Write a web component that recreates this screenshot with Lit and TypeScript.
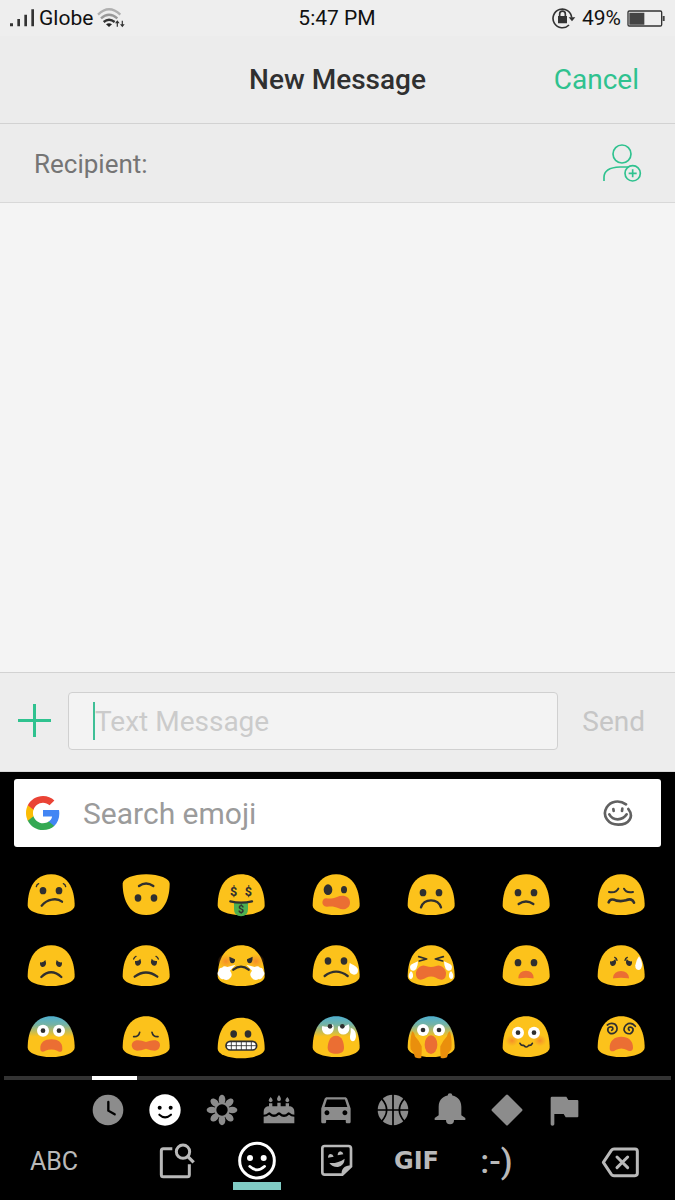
import { LitElement, html, svg, css, SVGTemplateResult } from "lit";
import { customElement, property, state } from "lit/decorators.js";
import { classMap } from "lit/directives/class-map.js";

interface Emoji {
  name: string;
  face: SVGTemplateResult;
  skin?: string;
}

interface Item {
  name: string;
  icon: SVGTemplateResult;
}

const INK = "#2f2f2f";
const MOUTH = "#eb6e33";

// faces are drawn on a 150 x 132 grid
const line = (d: string, w = 7) => svg`
  <path d=${d} fill="none" stroke=${INK} stroke-width=${w} stroke-linecap="round" stroke-linejoin="round"></path>`;

const fill = (d: string, color: string) => svg`<path d=${d} fill=${color}></path>`;

const eyes = (y: number, left = 51, right = 99) => svg`
  <ellipse cx=${left} cy=${y} rx="10" ry="11" fill=${INK}></ellipse>
  <ellipse cx=${right} cy=${y} rx="10" ry="11" fill=${INK}></ellipse>`;

const wideEyes = (y: number) => svg`
  <circle cx="51" cy=${y} r="18" fill="#fff"></circle>
  <circle cx="99" cy=${y} r="18" fill="#fff"></circle>
  <circle cx="51" cy=${y} r="7" fill=${INK}></circle>
  <circle cx="99" cy=${y} r="7" fill=${INK}></circle>`;

const sadEyes = (y: number) => svg`
  <g fill=${INK} transform="translate(0 ${y})">
    <path d="M42 -4 Q52 -2 58 -11 Q62 -1 59 4 Q55 11 49 10 Q41 8 42 -4z"></path>
    <path d="M108 -4 Q98 -2 92 -11 Q88 -1 91 4 Q95 11 101 10 Q109 8 108 -4z"></path>
  </g>`;

const dollar = (x: number, y: number, size: number) => svg`
  <text class="dollar" x=${x} y=${y} font-size=${size} text-anchor="middle" fill=${INK}>$</text>`;

const blush = (x: number, y: number, r = 20) => svg`
  <ellipse cx=${x} cy=${y} rx=${r} ry=${r - 3} fill="url(#blush)"></ellipse>`;

const EMOJIS: Emoji[] = [
  {
    name: "confused",
    face: svg`${eyes(53)}${line("M31 41 Q32 34 38 32", 4)}${line("M119 41 Q118 34 112 32", 4)}
      ${line("M47 98 Q60 83 77 80 Q95 76 108 86")}`,
  },
  {
    name: "upside down",
    skin: "flipped",
    face: svg`${eyes(75)}${line("M54 39 Q75 24 97 39")}`,
  },
  {
    name: "money mouth",
    face: svg`${dollar(53, 69, 38)}${dollar(97, 69, 38)}
      ${fill("M54 88 H96 V108 Q96 130 75 130 Q54 130 54 108z", "#4caf50")}
      ${line("M43 85 Q75 93 108 85")}${dollar(75, 119, 32)}`,
  },
  {
    name: "woozy",
    face: svg`<ellipse cx="51" cy="50" rx="13" ry="16" fill=${INK}></ellipse>
      <ellipse cx="99" cy="50" rx="9" ry="11" fill=${INK}></ellipse>
      ${fill("M46 76 C58 78 66 76 78 72 C96 64 117 70 117 89 C117 106 98 113 83 106 C70 99 60 100 48 101 C30 102 30 76 46 76z", MOUTH)}`,
  },
  { name: "frowning", face: svg`${eyes(59)}${line("M45 103 C54 75 96 75 105 103", 7)}` },
  { name: "slightly frowning", face: svg`${eyes(59)}${line("M53 93 Q75 78 97 93")}` },
  {
    name: "confounded",
    face: svg`${line("M39 57 Q60 61 67 47", 6)}${line("M111 57 Q90 61 84 47", 6)}
      ${line("M38 88 C42 76 54 79 61 83 C72 85 80 85 90 82 C102 77 111 79 114 89", 8)}`,
  },
  { name: "disappointed", face: svg`${sadEyes(59)}${line("M46 99 Q75 71 106 99")}` },
  {
    name: "worried",
    face: svg`${sadEyes(55)}${line("M38 45 Q40 39 45 37", 4)}${line("M112 45 Q110 39 105 37", 4)}
      ${line("M41 98 Q75 73 109 98")}`,
  },
  {
    name: "triumph",
    face: svg`${blush(30, 52, 26)}${blush(120, 52, 26)}
      ${fill("M40 38 L57 46 Q58 57 49 58 Q40 57 40 38z", INK)}${fill("M110 38 L93 46 Q92 57 101 58 Q110 57 110 38z", INK)}
      <g fill="#fff">
        <path d="M59 62 L34 69 Q24 64 18 71 Q9 70 8 81 Q1 89 9 97 Q12 108 22 105 Q34 112 43 101 Q52 92 42 80z"></path>
        <path d="M91 62 L116 69 Q126 64 132 71 Q141 70 142 81 Q149 89 141 97 Q138 108 128 105 Q116 112 107 101 Q98 92 108 80z"></path>
      </g>
      ${line("M52 77 Q75 59 98 77")}`,
  },
  {
    name: "crying",
    face: svg`${eyes(51)}${line("M41 96 Q75 70 110 96")}
      ${fill("M116 58 Q116 56 120 59 Q140 68 141 77 Q142 90 129 92 Q115 90 114 76 Q114 67 116 58z", "#fff")}`,
  },
  {
    name: "loudly crying",
    face: svg`${line("M38 38 L62 45 L40 51", 5)}${line("M112 38 L88 45 L110 51", 5)}
      ${fill("M46 66 C54 61 62 69 75 69 C88 69 96 61 104 66 C118 72 124 86 118 100 C112 112 98 106 90 101 Q75 94 60 101 C52 106 38 112 32 100 C26 86 32 72 46 66z", MOUTH)}
      <g fill="#fff">
        <path d="M36 52 Q36 64 31 74 Q24 84 14 77 Q8 64 20 59z"></path>
        <path d="M14 82 Q22 84 21 98 Q17 108 10 103 Q5 94 14 82z"></path>
        <path d="M114 52 Q114 64 119 74 Q126 84 136 77 Q142 64 130 59z"></path>
        <path d="M136 82 Q128 84 129 98 Q133 108 140 103 Q145 94 136 82z"></path>
      </g>`,
  },
  { name: "frowning open mouth", face: svg`${eyes(56)}${fill("M52 101 Q54 80 75 80 Q96 80 98 101 Q98 104 94 103 Q75 99 56 103 Q52 104 52 101z", MOUTH)}` },
  {
    name: "anxious with sweat",
    face: svg`${sadEyes(56)}${line("M56 40 Q62 42 63 49", 4)}${line("M94 40 Q88 42 87 49", 4)}
      ${fill("M51 101 Q54 81 75 81 Q96 81 99 101 Q99 104 95 103 Q75 99 55 103 Q51 104 51 101z", MOUTH)}
      ${fill("M129 37 Q138 48 138 64 Q137 78 127 78 Q117 77 118 64 Q120 48 129 37z", "#fff")}`,
  },
  {
    name: "fearful",
    skin: "chill",
    face: svg`${wideEyes(47)}
      ${fill("M43 102 C42 82 56 73 76 73 C96 73 110 82 109 102 C109 113 99 112 94 107 Q76 100 58 107 C52 112 43 112 43 102z", MOUTH)}`,
  },
  {
    name: "weary",
    face: svg`${line("M38 65 Q53 66 56 52", 5)}${line("M111 65 Q96 66 93 52", 5)}
      ${fill("M46 76 Q58 74 75 81 Q92 74 104 76 Q117 79 117 91 Q116 106 102 107 Q90 107 75 101 Q60 107 48 107 Q33 106 32 91 Q33 79 46 76z", MOUTH)}`,
  },
  {
    name: "grimacing",
    skin: "low",
    face: svg`${eyes(57, 53, 96)}
      <rect x="30" y="79" width="92" height="26" rx="13" fill="#fff" stroke=${INK} stroke-width="5"></rect>
      <path d="M30 92 H122 M46 79 V105 M61 79 V105 M76 79 V105 M91 79 V105 M106 79 V105" stroke=${INK} stroke-width="2.5"></path>`,
  },
  {
    name: "anxious in cold sweat",
    skin: "chill",
    face: svg`<g fill="#fff">
        <path d="M34 33 Q50 39 66 28 Q72 44 63 53 Q50 64 38 54 Q30 44 34 33z"></path>
        <path d="M82 33 Q98 38 113 28 Q119 44 110 53 Q97 64 85 54 Q78 44 82 33z"></path>
        <path d="M119 38 Q136 44 135 64 Q134 79 125 79 Q116 77 117 64 Q120 52 119 38z"></path>
      </g>
      <circle cx="57" cy="34" r="7" fill=${INK}></circle>
      <circle cx="94" cy="34" r="7" fill=${INK}></circle>
      ${fill("M75 62 C94 62 99 84 99 98 C99 112 88 116 75 116 C62 116 50 112 50 98 C50 84 56 62 75 62z", MOUTH)}`,
  },
  {
    name: "screaming",
    skin: "chill",
    face: svg`${wideEyes(45)}
      <ellipse cx="75" cy="89" rx="19" ry="28" fill=${MOUTH}></ellipse>
      <g fill="#ea8f0c">
        <path d="M18 49 Q24 51 27 64 Q40 78 47 94 Q48 108 46 128 Q38 132 27 127 Q24 112 14 103 Q11 78 18 49z"></path>
        <path d="M132 49 Q126 51 123 64 Q110 78 103 94 Q102 108 104 128 Q112 132 123 127 Q126 112 136 103 Q139 78 132 49z"></path>
      </g>`,
  },
  {
    name: "flushed",
    face: svg`${blush(33, 77)}${blush(117, 77)}${wideEyes(53)}
      ${line("M57 85 Q61 93 68 91 Q73 96 76 96 Q80 96 83 91 Q90 93 94 85", 5)}`,
  },
  {
    name: "dizzy",
    face: svg`${line("M34 30 Q44 22 56 27 Q66 35 62 47 Q55 59 42 55 Q33 49 36 40 Q41 33 49 37 Q53 43 47 46", 5)}
      ${line("M118 34 Q109 22 96 26 Q84 32 84 45 Q89 58 103 56 Q113 50 111 41 Q106 34 99 37 Q95 42 100 46", 5)}
      ${fill("M41 101 C40 76 56 65 76 65 C96 65 112 76 111 99 C110 111 98 109 93 105 Q76 96 59 105 C53 110 42 111 41 101z", MOUTH)}`,
  },
];

const CATEGORIES: Item[] = [
  {
    name: "Recent",
    icon: svg`<circle cx="48" cy="48" r="46"></circle>
      <path class="cut" d="M49 24 V50 L68 61" stroke-width="7"></path>`,
  },
  {
    name: "Smileys",
    icon: svg`<circle cx="48" cy="48" r="47"></circle>
      <circle cx="32" cy="41" r="6" fill="#000"></circle>
      <circle cx="65" cy="41" r="6" fill="#000"></circle>
      <path class="cut" d="M31 62 Q48 78 66 62" stroke-width="6"></path>`,
  },
  {
    name: "Nature",
    icon: svg`${[0, 45, 90, 135, 180, 225, 270, 315].map(
        (a) => svg`<ellipse cx="48" cy="17" rx="10" ry="15" transform="rotate(${a} 48 48)"></ellipse>`
      )}
      <circle cx="48" cy="48" r="23"></circle><circle cx="48" cy="48" r="17" fill="#000"></circle>`,
  },
  {
    name: "Food",
    icon: svg`<path d="M23 9 Q35 22 23 25 Q11 22 23 9z M48 3 Q60 18 48 22 Q36 18 48 3z M73 9 Q85 22 73 25 Q61 22 73 9z"></path>
      <path d="M18 28 H28 V37 H43 V26 H53 V37 H68 V28 H78 V37 H82 Q94 40 94 54 V62 Q86 62 80 56 Q77 53 74 56 Q63 67 52 56 Q48 53 44 56 Q33 67 22 56 Q19 53 16 56 Q10 62 2 62 V54 Q2 40 14 37 H18z"></path>
      <path d="M2 68 Q12 68 18 62 Q33 76 48 62 Q63 76 78 62 Q84 68 94 68 V88 H2z"></path>`,
  },
  {
    name: "Travel",
    icon: svg`<path transform="translate(-11 -15) scale(4.9)" d="M18.92 6.01C18.72 5.42 18.16 5 17.5 5h-11c-.66 0-1.21.42-1.42 1.01L3 12v8c0 .55.45 1 1 1h1c.55 0 1-.45 1-1v-1h12v1c0 .55.45 1 1 1h1c.55 0 1-.45 1-1v-8l-2.08-5.99zM6.5 16c-.83 0-1.5-.67-1.5-1.5S5.67 13 6.5 13s1.5.67 1.5 1.5S7.33 16 6.5 16zm11 0c-.83 0-1.5-.67-1.5-1.5s.67-1.5 1.5-1.5 1.5.67 1.5 1.5-.67 1.5-1.5 1.5zM5 11l1.5-4.5h11L19 11H5z"></path>`,
  },
  {
    name: "Activities",
    icon: svg`<circle cx="48" cy="48" r="46"></circle>
      <path class="cut" d="M48 0 V96 M0 48 H96 M14 14 Q44 48 14 82 M82 14 Q52 48 82 82" stroke-width="5"></path>`,
  },
  {
    name: "Objects",
    icon: svg`<circle cx="48" cy="5" r="7"></circle>
      <path d="M14 64 V38 C14 16 30 4 48 4 C66 4 82 16 82 38 V64 L94 72 V78 H2 V72z"></path>
      <path d="M36 78 H60 Q60 91 48 91 Q36 91 36 78z"></path>`,
  },
  {
    name: "Symbols",
    icon: svg`<path d="M45 3 Q48 0 51 3 L93 45 Q96 48 93 51 L51 93 Q48 96 45 93 L3 51 Q0 48 3 45z"></path>`,
  },
  {
    name: "Flags",
    icon: svg`<path d="M8 12 Q8 8 12 8 H55 L61 18 H88 Q91 18 91 21 V67 Q91 70 88 70 H53 L47 60 H19 V91 Q19 95 13 95 Q8 95 8 91z"></path>`,
  },
];

const SEARCH_ICON = svg`
  <path d="M46 23 H19 Q13 23 13 29 V101 Q13 107 19 107 H91 Q97 107 97 101 V70" stroke-width="9"></path>
  <circle cx="78" cy="32" r="20" stroke-width="9"></circle>
  <path d="M92 46 L110 64" stroke-width="10"></path>`;

const SMILEY_ICON = svg`
  <circle cx="60" cy="59" r="52" stroke-width="9"></circle>
  <circle cx="39" cy="51" r="9" fill="currentColor" stroke="none"></circle>
  <circle cx="80" cy="51" r="9" fill="currentColor" stroke="none"></circle>
  <path d="M38 76 Q60 97 83 76" stroke-width="8" stroke-linecap="round"></path>`;

const STICKER_ICON = svg`
  <path d="M23 15 H94 Q102 15 102 23 V76 L76 101 H23 Q16 101 16 94 V22 Q16 15 23 15z" stroke-width="8"></path>
  <g fill="currentColor" stroke="none">
    <path d="M74 104 Q70 74 104 73z"></path>
    <path d="M33 50 Q33 40 41 39 Q48 40 50 47z"></path>
    <path d="M62 43 Q62 33 70 31 Q78 32 79 40z"></path>
    <path d="M37 66 Q62 68 83 53 Q82 74 63 78 Q46 79 37 66z"></path>
  </g>`;

const DELETE_ICON = svg`
  <path d="M7 64 L31 28 Q34 24 39 24 H102 Q109 24 109 31 V97 Q109 104 102 104 H39 Q34 104 31 100z" stroke-width="9" stroke-linejoin="round"></path>
  <path d="M48 48 L80 80 M80 48 L48 80" stroke-width="9" stroke-linecap="round"></path>`;

@customElement("emoji-face")
class EmojiFace extends LitElement {
  @property({ attribute: false }) emoji!: Emoji;

  static styles = css`
    :host {
      display: block;
    }

    .face {
      display: block;
      width: 50px;
      height: 44px;
      overflow: visible;
    }

    .dollar {
      font-family: Roboto, sans-serif;
      font-weight: 700;
    }
  `;

  render() {
    const skin = this.emoji.skin;
    const place = skin === "flipped" ? "matrix(1 0 0 -1 0 130)" : skin === "low" ? "translate(0 4)" : "";
    return html`
      <svg class="face" viewBox="0 0 150 132" aria-hidden="true">
        <defs>
          <linearGradient id="chill" x1="0" y1="0" x2="0" y2="1">
            <stop offset="0" stop-color="#4fb0d0"></stop>
            <stop offset="0.2" stop-color="#74b3a6"></stop>
            <stop offset="0.5" stop-color="#fcc21b"></stop>
          </linearGradient>
          <radialGradient id="blush">
            <stop offset="0" stop-color="#f4802c" stop-opacity="0.8"></stop>
            <stop offset="1" stop-color="#f4902c" stop-opacity="0"></stop>
          </radialGradient>
        </defs>
        <path
          transform=${place}
          fill=${skin === "chill" ? "url(#chill)" : "#fcc21b"}
          d="M75.5 4 C7 4 5 82 5 98 C5 113 36 126 75.5 126 C115 126 146 113 146 98 C146 82 144 4 75.5 4z"
        ></path>
        ${this.emoji.face}
      </svg>
    `;
  }
}

@customElement("emoji-keyboard")
class EmojiKeyboard extends LitElement {
  @state() category = "Smileys";

  static styles = css`
    :host {
      display: block;
      padding: 7px 0 10px;
      background: #000;
      color: #b9b9b9;
      font-family: Roboto, sans-serif;
    }

    button {
      display: flex;
      align-items: center;
      justify-content: center;
      margin: 0;
      padding: 0;
      border: none;
      background: none;
      color: inherit;
      font: inherit;
      cursor: pointer;
    }

    .search {
      display: flex;
      align-items: center;
      height: 68px;
      margin: 0 14px 12px;
      padding: 0 28px 0 12px;
      box-sizing: border-box;
      border-radius: 3px;
      background: #fff;
      color: #616161;
    }

    .google {
      flex: none;
      width: 34px;
      height: 34px;
      margin-right: 23px;
    }

    .query {
      flex: 1;
      min-width: 0;
      padding: 2px 0 0;
      border: none;
      outline: none;
      background: none;
      font: 30px/36px Roboto, sans-serif;
      color: #333;
    }

    .query::placeholder {
      color: #9b9b9b;
      opacity: 1;
    }

    .doodle {
      width: 30px;
      height: 26px;
      fill: none;
      stroke: currentColor;
      stroke-width: 8;
      stroke-linecap: round;
    }

    .emojis {
      display: grid;
      grid-template-columns: repeat(7, 50px);
      justify-content: space-between;
      padding: 0 29px 0 26px;
    }

    .emojis button {
      height: 71px;
    }

    .track {
      height: 4px;
      margin: 4px 4px 0;
      padding-left: 88px;
      background: #333;
    }

    .thumb {
      width: 45px;
      height: 4px;
      background: #fff;
    }

    .categories {
      display: flex;
      justify-content: center;
      padding-right: 3px;
      color: #8c8c8c;
    }

    .categories button {
      width: 57px;
      height: 60px;
    }

    .categories .on,
    .tools .on {
      color: #fff;
    }

    .category {
      width: 32px;
      height: 32px;
      fill: currentColor;
      overflow: visible;
    }

    .cut {
      fill: none;
      stroke: #000;
      stroke-linecap: round;
    }

    .tools {
      display: flex;
      justify-content: space-between;
      padding: 0 30px;
    }

    .modes {
      display: flex;
      gap: 32px;
      padding-right: 2px;
    }

    .tools button {
      width: 48px;
      height: 50px;
      box-sizing: border-box;
      border-bottom: 8px solid transparent;
    }

    .tools .on {
      border-bottom-color: #80cbc4;
    }

    .tool {
      flex: none;
      width: 40px;
      height: 40px;
      fill: none;
      stroke: currentColor;
    }

    .abc {
      font-size: 25px;
    }

    .gif {
      font-family: "DejaVu Sans", sans-serif;
      font-size: 24px;
      font-weight: 700;
    }

    .kaomoji {
      font-size: 34px;
      font-weight: 500;
    }
  `;

  tool(name: string, icon: SVGTemplateResult, on = false) {
    return html`
      <button class=${classMap({ on })} aria-label=${name}>
        <svg class="tool" viewBox="0 0 120 120">${icon}</svg>
      </button>
    `;
  }

  render() {
    return html`
      <div class="search">
        <svg class="google" viewBox="2 2 44 44" aria-hidden="true">
          <path fill="#4285f4" d="M45.12 24.5c0-1.56-.14-3.06-.4-4.5H24v8.51h11.84c-.51 2.75-2.06 5.08-4.39 6.64v5.52h7.11c4.16-3.83 6.56-9.47 6.56-16.17z"></path>
          <path fill="#34a853" d="M24 46c5.94 0 10.92-1.97 14.56-5.33l-7.11-5.52c-1.97 1.32-4.49 2.1-7.45 2.1-5.73 0-10.58-3.87-12.31-9.07H4.34v5.7C7.96 41.07 15.4 46 24 46z"></path>
          <path fill="#fbbc05" d="M11.69 28.18C11.25 26.86 11 25.45 11 24s.25-2.86.69-4.18v-5.7H4.34C2.85 17.09 2 20.45 2 24c0 3.55.85 6.91 2.34 9.88l7.35-5.7z"></path>
          <path fill="#ea4335" d="M24 10.75c3.23 0 6.13 1.11 8.41 3.29l6.31-6.31C34.91 4.18 29.93 2 24 2 15.4 2 7.96 6.93 4.34 14.12l7.35 5.7c1.73-5.2 6.58-9.07 12.31-9.07z"></path>
        </svg>
        <input class="query" type="text" placeholder="Search emoji" aria-label="Search emoji">
        <button aria-label="Draw emoji">
          <svg class="doodle" viewBox="0 0 90 78">
            <path d="M69 13 C48 -2 22 4 11 22 C-4 48 16 74 46 74 C78 74 94 50 76 27"></path>
            <path d="M31 27 L32 33 M58 26 L57 33 M19 43 C30 63 58 63 71 43"></path>
          </svg>
        </button>
      </div>

      <div class="emojis">
        ${EMOJIS.map((emoji) => html`
          <button aria-label=${emoji.name}><emoji-face .emoji=${emoji}></emoji-face></button>
        `)}
      </div>

      <div class="track"><div class="thumb"></div></div>

      <nav class="categories">
        ${CATEGORIES.map((item) => html`
          <button
            class=${classMap({ on: item.name === this.category })}
            aria-label=${item.name}
            @click=${() => (this.category = item.name)}
          >
            <svg class="category" viewBox="0 0 96 96">${item.icon}</svg>
          </button>
        `)}
      </nav>

      <div class="tools">
        <button class="abc">ABC</button>
        <div class="modes">
          ${this.tool("Search", SEARCH_ICON)}
          ${this.tool("Emoji", SMILEY_ICON, true)}
          ${this.tool("Stickers", STICKER_ICON)}
          <button class="gif">GIF</button>
          <button class="kaomoji">:-)</button>
        </div>
        ${this.tool("Delete", DELETE_ICON)}
      </div>
    `;
  }
}

@customElement("app-root")
class AppRoot extends LitElement {
  @state() message = "";

  static styles = css`
    :host {
      display: flex;
      flex-direction: column;
      min-height: 100vh;
      background: #f4f4f4;
      font-family: Roboto, sans-serif;
    }

    button {
      margin: 0;
      padding: 0;
      border: none;
      background: none;
      font: inherit;
      cursor: pointer;
    }

    input {
      min-width: 0;
      padding: 0;
      border: none;
      outline: none;
      background: none;
      font: inherit;
    }

    .status {
      display: grid;
      grid-template-columns: 1fr auto 1fr;
      align-items: center;
      height: 36px;
      padding: 0 10px 0 9px;
      background: #eeeeee;
      color: #111;
      font-size: 21px;
      line-height: 24px;
    }

    .left,
    .right {
      display: flex;
      align-items: center;
      gap: 4px;
    }

    .right {
      justify-content: flex-end;
      gap: 6px;
    }

    .status svg {
      flex: none;
    }

    .signal {
      width: 26px;
      height: 18px;
    }

    .wifi {
      width: 29px;
      height: 20px;
    }

    .lock {
      width: 24px;
      height: 22px;
    }

    .battery {
      width: 38px;
      height: 17px;
    }

    .header {
      display: grid;
      grid-template-columns: 1fr auto 1fr;
      align-items: center;
      height: 88px;
      padding: 0 36px;
      box-sizing: border-box;
      border-bottom: 1px solid #d2d2d2;
      background: #ececec;
      font-size: 28px;
      line-height: 32px;
    }

    .title {
      grid-column: 2;
      margin: 0;
      color: #303030;
      font-size: 28px;
      font-weight: 500;
    }

    .cancel {
      justify-self: end;
      color: #2fc28f;
    }

    .recipient {
      display: flex;
      align-items: center;
      height: 79px;
      padding: 0 33px 0 34px;
      box-sizing: border-box;
      border-bottom: 1px solid #d8d8d8;
      background: #ececec;
      color: #757575;
      font-size: 26px;
    }

    .recipient label {
      padding-top: 2px;
    }

    .to {
      flex: 1;
      margin-left: 8px;
    }

    .person {
      display: block;
      width: 40px;
      height: 40px;
      fill: none;
      stroke: #2fc28f;
      stroke-width: 5;
    }

    .thread {
      flex: 1;
    }

    .composer {
      display: flex;
      align-items: center;
      height: 100px;
      padding: 0 30px 2px 18px;
      box-sizing: border-box;
      border-top: 1px solid #d2d2d2;
      border-bottom: 1px solid #d8d8d8;
      background: #ededed;
      font-size: 28px;
    }

    .plus {
      display: block;
      width: 33px;
      height: 33px;
      padding-bottom: 2px;
      fill: none;
      stroke: #2fc28f;
      stroke-width: 3;
    }

    .box {
      display: flex;
      flex: 1;
      align-items: center;
      height: 58px;
      margin: 0 24px 0 17px;
      padding-left: 24px;
      box-sizing: border-box;
      border: 1px solid #d0d0d0;
      border-radius: 4px;
      background: #f3f3f3;
    }

    .caret {
      width: 2px;
      height: 38px;
      background: #3fbf96;
    }

    .text {
      flex: 1;
      padding-top: 2px;
      line-height: 36px;
    }

    .text::placeholder {
      color: #cbcbcb;
      opacity: 1;
    }

    .send {
      color: #c6c6c6;
    }
  `;

  typeMessage(e: Event) {
    this.message = (e.target as HTMLInputElement).value;
  }

  render() {
    return html`
      <div class="status">
        <div class="left">
          <svg class="signal" viewBox="0 0 78 54" fill="#333">
            <path d="M3 43h9v9H3z M25 30h8v22h-8z M46 17h8v35h-8z M67 1h8v51h-8z"></path>
          </svg>
          <span>Globe</span>
          <svg class="wifi" viewBox="0 0 87 60" fill="none" stroke-width="7">
            <path stroke="#b0b0b0" d="M3 20 Q36 -12 70 20"></path>
            <path stroke="#999" d="M12 31 Q36 9 61 31"></path>
            <path stroke="#333" d="M20 42 Q36 28 53 42"></path>
            <path fill="#222" d="M27 49 Q36 43 45 49 L36 57z"></path>
            <path stroke="#444" stroke-width="4" d="M61 56 V41 M76 38 V54"></path>
            <path fill="#333" d="M54 46 L61 37 L68 46z M69 49 L76 58 L83 49z"></path>
          </svg>
        </div>
        <span>5:47 PM</span>
        <div class="right">
          <svg class="lock" viewBox="0 0 72 66" fill="none" stroke="#333">
            <path stroke-width="5" d="M51 54 A28 28 0 1 1 59 32"></path>
            <path fill="#333" stroke="none" d="M50 31 H70 L60 43z M18 27 H45 V49 H18z"></path>
            <path stroke-width="5" d="M23 28 V21 a8 8 0 0 1 17 0 V28"></path>
          </svg>
          <span>49%</span>
          <svg class="battery" viewBox="0 0 114 51">
            <rect x="3" y="3" width="101" height="45" rx="4" fill="none" stroke="#333" stroke-width="4"></rect>
            <path fill="#444" d="M7 8h45v36H7z M107 18h6v15h-6z"></path>
          </svg>
        </div>
      </div>

      <header class="header">
        <h1 class="title">New Message</h1>
        <button class="cancel">Cancel</button>
      </header>

      <div class="recipient">
        <label for="to">Recipient:</label>
        <input id="to" class="to" type="text">
        <button aria-label="Add contact">
          <svg class="person" viewBox="0 0 120 120">
            <circle cx="60" cy="33" r="27"></circle>
            <path d="M6 114 V103 C6 83 24 73 54 72 H79"></path>
            <circle cx="92" cy="91" r="23"></circle>
            <path d="M80 91 H104 M92 79 V103"></path>
          </svg>
        </button>
      </div>

      <main class="thread"></main>

      <div class="composer">
        <button aria-label="Attach">
          <svg class="plus" viewBox="0 0 33 33">
            <path d="M0 16.5 H33 M16.5 0 V33"></path>
          </svg>
        </button>
        <div class="box">
          <span class="caret"></span>
          <input
            class="text"
            type="text"
            placeholder="Text Message"
            aria-label="Text Message"
            .value=${this.message}
            @input=${this.typeMessage}
          >
        </div>
        <button class="send">Send</button>
      </div>

      <emoji-keyboard></emoji-keyboard>
    `;
  }
}
